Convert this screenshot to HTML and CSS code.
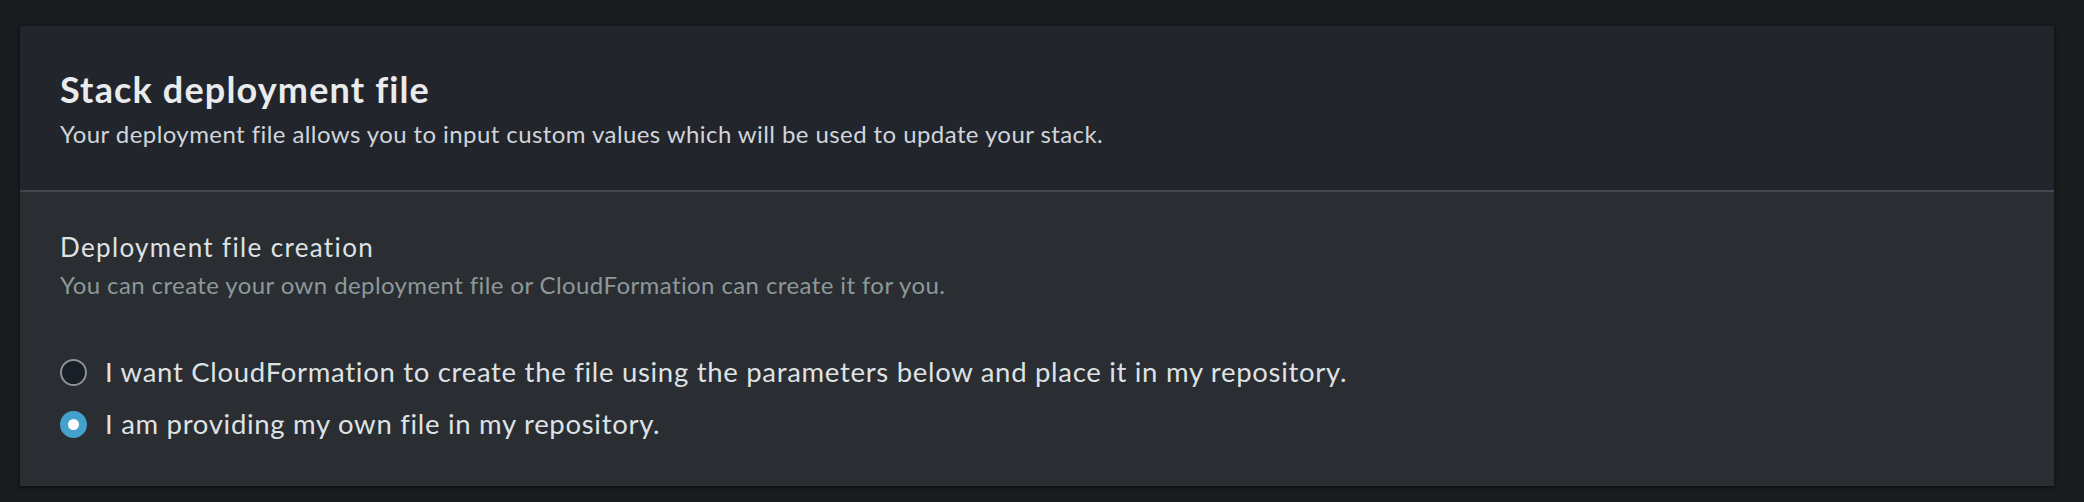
FILE: index.html
```html
<!DOCTYPE html>
<html lang="en">
<head>
    <meta charset="UTF-8">
    <meta name="viewport" content="width=device-width, initial-scale=1.0">
    <title>Stack deployment file</title>
    <link rel="stylesheet" href="styles.css">
</head>
<body>
    <div class="container">
        <div class="container-header">
            <h2>Stack deployment file</h2>
            <p>Your deployment file allows you to input custom values which will be used to update your stack.</p>
        </div>
        <div class="container-body">
            <div class="field-label">Deployment file creation</div>
            <div class="field-description">You can create your own deployment file or CloudFormation can create it for you.</div>
            <div class="radio-group">
                <label class="radio">
                    <input type="radio" name="deployment-file" value="generate">
                    <span class="radio-control"></span>
                    <span class="radio-label">I want CloudFormation to create the file using the parameters below and place it in my repository.</span>
                </label>
                <label class="radio">
                    <input type="radio" name="deployment-file" value="own" checked>
                    <span class="radio-control"></span>
                    <span class="radio-label">I am providing my own file in my repository.</span>
                </label>
            </div>
        </div>
    </div>
</body>
</html>
```

FILE: styles.css
```css
* {
    margin: 0;
    padding: 0;
    box-sizing: border-box;
}
body {
    font-family: 'Lato', 'Open Sans', sans-serif;
    background: #1a1b1f;
    color: #d5dbdb;
    padding: 26px 30px 18px 20px;
}
.container {
    background: #2a2d32;
    box-shadow: 0 1px 4px rgba(0, 0, 0, 0.6);
    display: flex;
    flex-direction: column;
}
.container-header {
    background: #22252b;
    padding: 42px 40px 42px;
    border-bottom: 2px solid #414750;
}
.container-header h2 {
    font-size: 36px;
    line-height: 42px;
    font-weight: 700;
    letter-spacing: 1.15px;
    color: #e9ebed;
}
.container-header p {
    margin-top: 9px;
    font-size: 24px;
    line-height: 29px;
    letter-spacing: 0.42px;
    color: #d1d5db;
}
.container-body {
    padding: 40px 40px 46px;
}
.field-label {
    font-size: 26px;
    line-height: 31px;
    letter-spacing: 1.35px;
    color: #dfe2e4;
}
.field-description {
    margin-top: 7px;
    font-size: 24px;
    line-height: 29px;
    letter-spacing: 0.4px;
    color: #8d9999;
}
.radio-group {
    margin-top: 57px;
    display: flex;
    flex-direction: column;
    gap: 20px;
}
.radio {
    display: flex;
    align-items: center;
    gap: 18px;
    cursor: pointer;
}
.radio input {
    display: none;
}
.radio-control {
    width: 27px;
    height: 27px;
    border-radius: 50%;
    border: 2.5px solid #879596;
    background: #1a1f27;
    flex-shrink: 0;
}
.radio input:checked + .radio-control {
    border: 8.5px solid #44a1cb;
    background: #fff;
}
.radio-label {
    font-size: 27.5px;
    line-height: 32px;
    letter-spacing: 0.7px;
    color: #dfe2e4;
}
```
